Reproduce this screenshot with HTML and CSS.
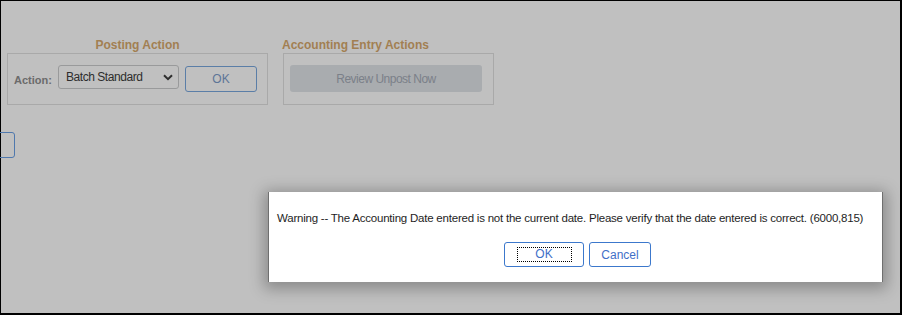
FILE: index.html
```html
<!DOCTYPE html>
<html>
<head>
<meta charset="utf-8">
<link rel="stylesheet" href="styles.css">
</head>
<body>
<div class="frame">
  <div class="sections">
    <div class="section posting">
      <div class="sec-title center">Posting Action</div>
      <div class="sec-box posting-box">
        <span class="label">Action:</span>
        <div class="select">
          <span>Batch Standard</span>
          <svg class="chev" width="10" height="7" viewBox="0 0 10 7"><path d="M1 1.2 L5 5.2 L9 1.2" fill="none" stroke="#2e2e2e" stroke-width="2"/></svg>
        </div>
        <div class="btn-ok">OK</div>
      </div>
    </div>
    <div class="section accounting">
      <div class="sec-title">Accounting Entry Actions</div>
      <div class="sec-box acc-box">
        <div class="btn-disabled">Review Unpost Now</div>
      </div>
    </div>
  </div>
  <div class="partial-btn"></div>

  <div class="dialog">
    <div class="msg">Warning -- The Accounting Date entered is not the current date. Please verify that the date entered is correct. (6000,815)</div>
    <div class="dlg-buttons">
      <div class="dbtn dbtn-ok"><span class="focus">OK</span></div>
      <div class="dbtn dbtn-cancel">Cancel</div>
    </div>
  </div>
</div>
</body>
</html>
```

FILE: styles.css
```css
* { box-sizing: border-box; }
html, body { margin: 0; padding: 0; }
body {
  font-family: "Liberation Sans", Arial, sans-serif;
  font-size: 12px;
  width: 902px;
  height: 315px;
  overflow: hidden;
}
.frame {
  position: relative;
  width: 902px;
  height: 315px;
  background: #c0c0c0;
  border-top: 1px solid #000;
  border-left: 1px solid #000;
  border-right: 2px solid #000;
  border-bottom: 2px solid #000;
}
.sections {
  display: flex;
  gap: 15px;
  padding: 36px 0 0 6px;
}
.section { display: flex; flex-direction: column; }
.posting { width: 261px; }
.accounting { width: 211px; }
.sec-title {
  font-weight: bold;
  font-size: 12px;
  color: #a27f52;
  height: 16px;
  line-height: 16px;
}
.sec-title.center { text-align: center; }
.accounting .sec-title { margin-left: -1px; white-space: nowrap; }
.sec-box {
  border: 1px solid #a9a9a9;
  height: 52px;
}
.posting-box {
  display: flex;
  align-items: flex-start;
  padding: 11px 0 0 6px;
}
.label {
  font-weight: bold;
  font-size: 11px;
  color: #6b6b6b;
  margin-top: 9px;
  width: 44px;
}
.select {
  width: 121px;
  height: 24px;
  border: 1px solid #999a9b;
  border-radius: 3px;
  display: flex;
  align-items: center;
  justify-content: space-between;
  padding: 0 5px 0 7px;
  color: #2d2d2d;
  letter-spacing: -0.45px;
}
.chev { margin-top: 1px; }
.btn-ok {
  width: 72px;
  height: 26px;
  margin-left: 6px;
  margin-top: 1px;
  border: 1px solid #5b7ea7;
  border-radius: 3px;
  color: #5d7597;
  display: flex;
  align-items: center;
  justify-content: center;
}
.acc-box {
  padding: 11px 0 0 6px;
}
.btn-disabled {
  width: 192px;
  height: 27px;
  background: #a9acaf;
  border-radius: 3px;
  color: #7b8089;
  letter-spacing: -0.5px;
  display: flex;
  align-items: center;
  justify-content: center;
}
.partial-btn {
  width: 75px;
  height: 26px;
  margin: 27px 0 0 -61px;
  border: 1.5px solid #4f78ad;
  border-radius: 3px;
}
.dialog {
  position: absolute;
  left: 267px;
  top: 191px;
  width: 615px;
  height: 90px;
  background: #fff;
  border-left: 1px solid #6f6f6f;
  border-right: 1px solid #6f6f6f;
  box-shadow: 0 3px 14px 4px rgba(0,0,0,0.28);
  padding: 19px 8px 0 8px;
}
.msg {
  color: #1e1e1e;
  font-size: 11.5px;
  line-height: 14px;
  white-space: nowrap;
  letter-spacing: -0.22px;
}
.dlg-buttons {
  display: flex;
  justify-content: center;
  gap: 5px;
  margin-top: 17px;
  padding-left: 4px;
}
.dbtn {
  height: 25px;
  border: 1px solid #3c78cc;
  border-radius: 3px;
  color: #3f6fc8;
  display: flex;
  align-items: center;
  justify-content: center;
}
.dbtn-ok { width: 80px; }
.dbtn-cancel { width: 62px; }
.focus {
  display: block;
  width: 55px;
  height: 15px;
  line-height: 13px;
  text-align: center;
  border: 1px dotted #000;
}
```
